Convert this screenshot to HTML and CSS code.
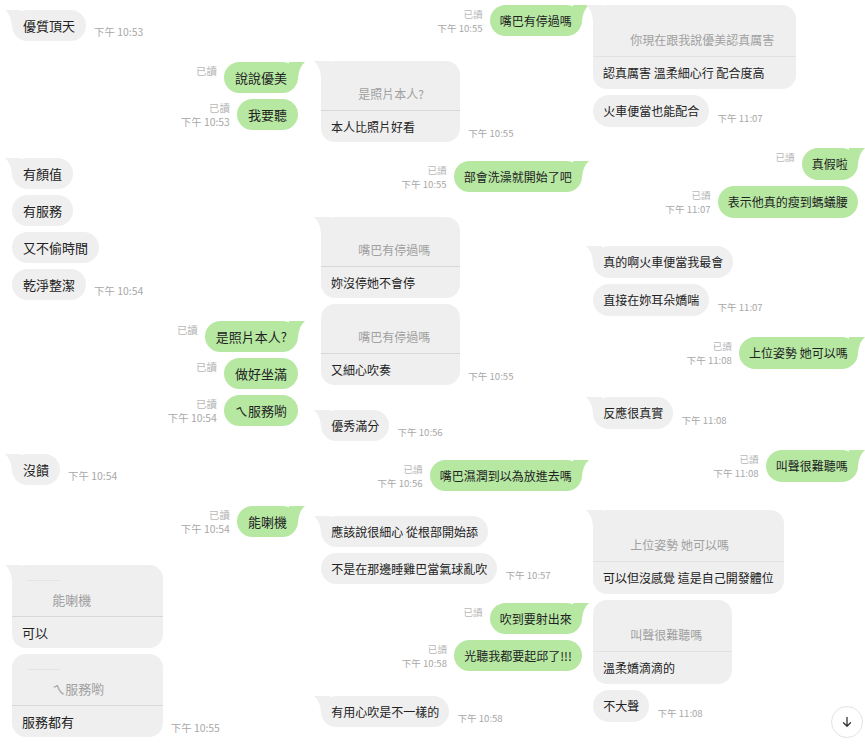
FILE: index.html
```html
<!DOCTYPE html>
<html lang="zh-Hant">

<head>
    <meta charset="UTF-8">
    <meta name="viewport" content="width=device-width, initial-scale=1.0">
    <title>聊天紀錄</title>
    <link rel="stylesheet" href="styles.css">
</head>

<body>
    <div class="chat">

        <!-- 第一段 -->
        <div class="col col-a">
            <div class="row in lead">
                <div class="bubble">優質頂天</div>
                <span class="time">下午 10:53</span>
            </div>
            <div class="row out lead">
                <div class="meta"><span class="read">已讀</span></div>
                <div class="bubble">說說優美</div>
            </div>
            <div class="row out">
                <div class="meta"><span class="read">已讀</span><span>下午 10:53</span></div>
                <div class="bubble">我要聽</div>
            </div>
            <div class="row in lead">
                <div class="bubble">有顏值</div>
            </div>
            <div class="row in">
                <div class="bubble">有服務</div>
            </div>
            <div class="row in">
                <div class="bubble">又不偷時間</div>
            </div>
            <div class="row in">
                <div class="bubble">乾淨整潔</div>
                <span class="time">下午 10:54</span>
            </div>
            <div class="row out lead">
                <div class="meta"><span class="read">已讀</span></div>
                <div class="bubble">是照片本人?</div>
            </div>
            <div class="row out">
                <div class="meta"><span class="read">已讀</span></div>
                <div class="bubble">做好坐滿</div>
            </div>
            <div class="row out">
                <div class="meta"><span class="read">已讀</span><span>下午 10:54</span></div>
                <div class="bubble">ㄟ服務喲</div>
            </div>
            <div class="row in lead">
                <div class="bubble">沒饋</div>
                <span class="time">下午 10:54</span>
            </div>
            <div class="row out lead">
                <div class="meta"><span class="read">已讀</span><span>下午 10:54</span></div>
                <div class="bubble">能喇機</div>
            </div>
            <div class="row in lead">
                <div class="bubble reply">
                    <div class="quote"><i class="quote-from"></i><span>能喇機</span></div>
                    <div class="reply-text">可以</div>
                </div>
            </div>
            <div class="row in">
                <div class="bubble reply">
                    <div class="quote"><i class="quote-from"></i><span>ㄟ服務喲</span></div>
                    <div class="reply-text">服務都有</div>
                </div>
                <span class="time">下午 10:55</span>
            </div>
        </div>

        <!-- 第二段 -->
        <div class="col col-b">
            <div class="row out lead">
                <div class="meta"><span class="read">已讀</span><span>下午 10:55</span></div>
                <div class="bubble">嘴巴有停過嗎</div>
            </div>
            <div class="row in lead">
                <div class="bubble reply">
                    <div class="quote"><span>是照片本人?</span></div>
                    <div class="reply-text">本人比照片好看</div>
                </div>
                <span class="time">下午 10:55</span>
            </div>
            <div class="row out lead">
                <div class="meta"><span class="read">已讀</span><span>下午 10:55</span></div>
                <div class="bubble">部會洗澡就開始了吧</div>
            </div>
            <div class="row in lead">
                <div class="bubble reply">
                    <div class="quote"><span>嘴巴有停過嗎</span></div>
                    <div class="reply-text">妳沒停她不會停</div>
                </div>
            </div>
            <div class="row in">
                <div class="bubble reply">
                    <div class="quote"><span>嘴巴有停過嗎</span></div>
                    <div class="reply-text">又細心吹奏</div>
                </div>
                <span class="time">下午 10:55</span>
            </div>
            <div class="row in lead">
                <div class="bubble">優秀滿分</div>
                <span class="time">下午 10:56</span>
            </div>
            <div class="row out lead">
                <div class="meta"><span class="read">已讀</span><span>下午 10:56</span></div>
                <div class="bubble">嘴巴濕潤到以為放進去嗎</div>
            </div>
            <div class="row in lead">
                <div class="bubble">應該說很細心 從根部開始舔</div>
            </div>
            <div class="row in">
                <div class="bubble">不是在那邊睡雞巴當氣球亂吹</div>
                <span class="time">下午 10:57</span>
            </div>
            <div class="row out lead">
                <div class="meta"><span class="read">已讀</span></div>
                <div class="bubble">吹到要射出來</div>
            </div>
            <div class="row out">
                <div class="meta"><span class="read">已讀</span><span>下午 10:58</span></div>
                <div class="bubble">光聽我都要起邱了!!!</div>
            </div>
            <div class="row in lead">
                <div class="bubble">有用心吹是不一樣的</div>
                <span class="time">下午 10:58</span>
            </div>
        </div>

        <!-- 第三段 -->
        <div class="col col-c">
            <div class="row in lead">
                <div class="bubble reply">
                    <div class="quote"><span>你現在跟我說優美認真厲害</span></div>
                    <div class="reply-text">認真厲害 溫柔細心行 配合度高</div>
                </div>
            </div>
            <div class="row in">
                <div class="bubble">火車便當也能配合</div>
                <span class="time">下午 11:07</span>
            </div>
            <div class="row out lead">
                <div class="meta"><span class="read">已讀</span></div>
                <div class="bubble">真假啦</div>
            </div>
            <div class="row out">
                <div class="meta"><span class="read">已讀</span><span>下午 11:07</span></div>
                <div class="bubble">表示他真的瘦到螞蟻腰</div>
            </div>
            <div class="row in lead">
                <div class="bubble">真的啊火車便當我最會</div>
            </div>
            <div class="row in">
                <div class="bubble">直接在妳耳朵嬌喘</div>
                <span class="time">下午 11:07</span>
            </div>
            <div class="row out lead">
                <div class="meta"><span class="read">已讀</span><span>下午 11:08</span></div>
                <div class="bubble">上位姿勢 她可以嗎</div>
            </div>
            <div class="row in lead">
                <div class="bubble">反應很真實</div>
                <span class="time">下午 11:08</span>
            </div>
            <div class="row out lead">
                <div class="meta"><span class="read">已讀</span><span>下午 11:08</span></div>
                <div class="bubble">叫聲很難聽嗎</div>
            </div>
            <div class="row in lead">
                <div class="bubble reply">
                    <div class="quote"><span>上位姿勢 她可以嗎</span></div>
                    <div class="reply-text">可以但沒感覺 這是自己開發體位</div>
                </div>
            </div>
            <div class="row in">
                <div class="bubble reply">
                    <div class="quote"><span>叫聲很難聽嗎</span></div>
                    <div class="reply-text">溫柔嬌滴滴的</div>
                </div>
            </div>
            <div class="row in">
                <div class="bubble">不大聲</div>
                <span class="time">下午 11:08</span>
            </div>
        </div>

        <!-- 捲到最新訊息 -->
        <button class="to-bottom" type="button">
            <svg width="12" height="12" viewBox="0 0 12 12">
                <path d="M6 1.5v8.5M2.5 6.8L6 10.2l3.5-3.4" fill="none" stroke="#333" stroke-width="1.3"
                    stroke-linecap="round" stroke-linejoin="round" />
            </svg>
        </button>
    </div>
</body>

</html>
```

FILE: styles.css
```css
* {
    box-sizing: border-box;
}

body {
    margin: 0;
    background-color: #fff;
    font-family: "Noto Sans CJK TC", "Noto Sans", sans-serif;
    color: #222;
}

.chat {
    position: relative;
    display: grid;
    grid-template-columns: 305px 285px 275px;
    height: 744px;
    overflow: hidden;
}

/* 每一段的字級、泡泡高度和間距 */
.col {
    display: flex;
    flex-direction: column;
    font-size: var(--fs);
}

.col-a {
    --fs: 13px;
    --h: 31px;
    --turn-in: 28px;
    --turn-out: 21px;
    --quote-h: 52px;
    padding: 10px 7px 0 12px;
}

.col-b {
    --fs: 12px;
    --h: 31px;
    --turn-in: 25px;
    --turn-out: 19px;
    --quote-h: 50px;
    padding: 5px 8px 0 16px;
}

.col-c {
    --fs: 12px;
    --h: 32px;
    --turn-in: 28px;
    --turn-out: 21px;
    --quote-h: 52px;
    padding: 5px 7px 0 3px;
}

.row {
    display: flex;
    align-items: flex-start;
    margin-top: 6px;
}

.row.out {
    justify-content: flex-end;
}

.row.in.lead {
    margin-top: var(--turn-in);
}

.row.out.lead {
    margin-top: var(--turn-out);
}

.col > .row.lead:first-child {
    margin-top: 0;
}

.bubble {
    position: relative;
    height: var(--h);
    line-height: var(--h);
    padding: 0 0.85em;
    border-radius: 16px;
    background-color: #efefef;
    white-space: nowrap;
}

.out .bubble {
    background-color: #b6e8a2;
}

/* 泡泡的小尾巴 */
.lead .bubble::before {
    content: "";
    position: absolute;
    top: 0;
    left: -7px;
    width: 16px;
    height: 16px;
    background: inherit;
    clip-path: path("M0 0 Q8 0 16 0 L16 16 L7 16 Q6 5 0 0 Z");
}

.out.lead .bubble::before {
    left: auto;
    right: -7px;
    transform: scaleX(-1);
}

/* 回覆訊息 */
.bubble.reply {
    height: auto;
    min-width: 11.6em;
    padding: 0;
    line-height: normal;
    border-radius: 14px;
}

.quote {
    display: flex;
    flex-direction: column;
    justify-content: flex-end;
    height: var(--quote-h);
    padding: 0 22px 9px 3.1em;
    line-height: 15px;
    color: #a0a0a0;
    border-bottom: 1px solid #d8d8d8;
}

.col-c .quote {
    border-bottom-color: #e2e2e2;
}

.quote-from {
    display: block;
    width: 33px;
    height: 1px;
    margin: 15px 0 auto calc(15px - 3.1em);
    background-color: #e4e4e4;
}

.reply-text {
    height: var(--h);
    line-height: var(--h);
    padding: 0 10px;
}

/* 已讀和時間 */
.meta {
    display: flex;
    flex-direction: column;
    align-items: flex-end;
    margin-right: 7px;
    padding-top: 2px;
    font-size: 0.8em;
    line-height: 14px;
    color: #a8a8a8;
    white-space: nowrap;
}

.meta .read {
    color: #b8b8b8;
}

.time {
    align-self: flex-end;
    margin-left: 8px;
    padding-bottom: 2px;
    font-size: 0.8em;
    line-height: 14px;
    color: #a8a8a8;
    white-space: nowrap;
}

.to-bottom {
    position: absolute;
    right: 2px;
    bottom: 6px;
    width: 32px;
    height: 32px;
    padding: 0;
    border: 1px solid #e3e3e3;
    border-radius: 50%;
    background-color: #fff;
    display: flex;
    align-items: center;
    justify-content: center;
}
```
